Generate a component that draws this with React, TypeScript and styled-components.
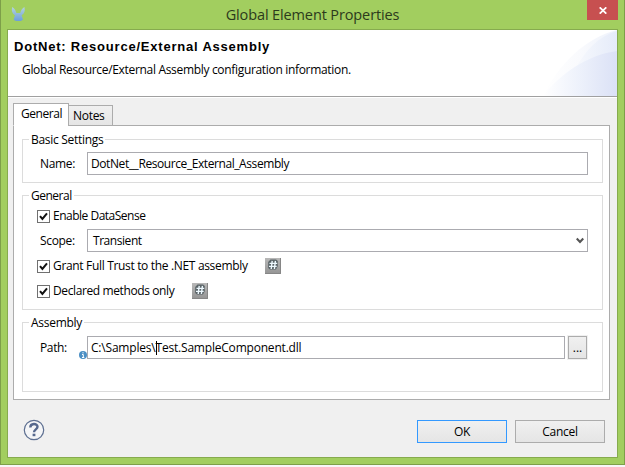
import React from "react";
import styled, { createGlobalStyle } from "styled-components";

const GlobalStyle = createGlobalStyle`
  *, *::before, *::after { box-sizing: border-box; }
  html, body { margin: 0; padding: 0; background: #f7f7f7; overflow: hidden; }
  body { font-family: "Open Sans", "Noto Sans", sans-serif; font-size: 12px; line-height: 16px; color: #000; }
  button, input { font: inherit; color: inherit; }
`;

const Window = styled.div`
  width: 625px;
  height: 465px;
  display: flex;
  flex-direction: column;
  background: #a2ce5f;
  border: 1px solid #7d9f49;
  border-top: 0;
  padding: 0 6px 6px;
`;

const TitleBar = styled.header`
  position: relative;
  height: 29px;
  flex: none;
  display: flex;
  justify-content: center;
`;

const AppIcon = styled.svg`
  position: absolute;
  left: 4px;
  top: 6px;
`;

const WindowTitle = styled.h1`
  margin: 0;
  font-size: 14.5px;
  font-weight: 400;
  line-height: 30px;
  letter-spacing: -0.12px;
  color: #2c3a1c;
  white-space: nowrap;
`;

const CloseButton = styled.button`
  position: absolute;
  right: 0;
  top: 0;
  width: 31px;
  height: 20px;
  padding: 0;
  border: 0;
  background: #c75050;
  display: flex;
  align-items: center;
  justify-content: center;
`;

const Client = styled.main`
  flex: 1;
  display: flex;
  flex-direction: column;
  border: 1px solid #86ab4e;
  background: #f0f0f0;
`;

const Banner = styled.section`
  position: relative;
  height: 67px;
  flex: none;
  background: #fff;
  border-bottom: 1px solid #a0a0a0;
  padding: 9px 0 0 6px;
`;

const BannerArt = styled.svg`
  position: absolute;
  right: 0;
  top: 0;
`;

const BannerTitle = styled.h2`
  margin: 0;
  font: 700 13px/16px "Liberation Sans", Arial, sans-serif;
  letter-spacing: 0.79px;
  white-space: nowrap;
`;

const BannerText = styled.p<{ $spacing: number }>`
  margin: 7px 0 0 8px;
  letter-spacing: ${(p) => p.$spacing}px;
  white-space: nowrap;
`;

const Body = styled.div`
  flex: 1;
  border-top: 1px solid #fff;
  padding: 5px 7px 0 5px;
`;

const Tabs = styled.nav`
  display: flex;
  align-items: flex-end;
  height: 23px;
  margin-bottom: -1px;
  position: relative;
`;

const Tab = styled.div<{ $active?: boolean }>`
  width: ${(p) => (p.$active ? 56 : 45)}px;
  height: ${(p) => (p.$active ? 23 : 21)}px;
  margin-left: ${(p) => (p.$active ? 0 : -1)}px;
  border: 1px solid #acacac;
  border-bottom-color: ${(p) => (p.$active ? "#fff" : "#acacac")};
  background: ${(p) => (p.$active ? "#fff" : "linear-gradient(#f0f0f0, #e5e5e5)")};
  padding: ${(p) => (p.$active ? "2px 0 0 7px" : "2px 0 0 4px")};
  letter-spacing: ${(p) => (p.$active ? -0.45 : -0.3)}px;
`;

const Pane = styled.div`
  height: 275px;
  border: 1px solid #acacac;
  background: #fff;
  padding: 13px 6px 0 8px;
`;

const Group = styled.section<{ $height: number; $gap?: number }>`
  height: ${(p) => p.$height}px;
  margin-bottom: ${(p) => p.$gap ?? 12}px;
  border: 1px solid #dcdcdc;
`;

const Legend = styled.h3<{ $spacing: number }>`
  width: max-content;
  height: 16px;
  margin: -8px 0 0 6px;
  padding: 0 2px;
  background: #fff;
  font-size: 12px;
  font-weight: 400;
  letter-spacing: ${(p) => p.$spacing}px;
`;

const Field = styled.div<{ $top: number }>`
  display: flex;
  align-items: center;
  height: 23px;
  margin-top: ${(p) => p.$top}px;
  padding-right: 14px;
`;

const FieldLabel = styled.label<{ $spacing: number }>`
  position: relative;
  width: 64px;
  padding-left: 17px;
  flex: none;
  letter-spacing: ${(p) => p.$spacing}px;
`;

const InfoIcon = styled.svg`
  position: absolute;
  left: 56px;
  top: 11px;
`;

const InputBox = styled.div<{ $spacing: number; $indent?: number }>`
  flex: 1;
  height: 23px;
  display: flex;
  align-items: center;
  border: 1px solid #ababb0;
  background: #fff;
  padding: 0 3px 0 ${(p) => p.$indent ?? 3}px;
  letter-spacing: ${(p) => p.$spacing}px;
  white-space: nowrap;
`;

const Caret = styled.span`
  width: 1px;
  height: 14px;
  margin-right: -1px;
  background: #000;
`;

const Chevron = styled.svg`
  margin-left: auto;
`;

const CheckRow = styled.div<{ $top: number }>`
  display: flex;
  align-items: center;
  height: 16px;
  margin-top: ${(p) => p.$top}px;
  padding-left: 14px;
`;

const CheckBox = styled.span`
  width: 13px;
  height: 13px;
  margin-right: 3px;
  border: 1px solid #707070;
  background: #fff;
  display: flex;
`;

const CheckLabel = styled.span<{ $width: number; $spacing: number }>`
  width: ${(p) => p.$width}px;
  letter-spacing: ${(p) => p.$spacing}px;
  white-space: nowrap;
`;

const PushButton = styled.button<{ $default?: boolean }>`
  width: 90px;
  height: 23px;
  padding: 0;
  border: 1px solid ${(p) => (p.$default ? "#3399ff" : "#acacac")};
  background: linear-gradient(#f0f0f0, #e5e5e5);
  letter-spacing: -0.25px;
`;

const BrowseButton = styled(PushButton)`
  width: 19px;
  margin: 0 1px 0 3px;
  box-shadow: 0 0 0 1px #f0f0f0;
  letter-spacing: 0;
`;

const Footer = styled.footer`
  display: flex;
  align-items: flex-start;
  gap: 8px;
  margin: 20px 5px 0 10px;
`;

const HelpIcon = styled.svg`
  margin: -1px auto 0 0;
`;

const HashIcon = () => (
  <svg width="16" height="16" viewBox="0 0 16 16">
    <defs>
      <linearGradient id="hashBg" x1="0" y1="0" x2="0" y2="1">
        <stop offset="0" stopColor="#b8b8b8" />
        <stop offset="1" stopColor="#949494" />
      </linearGradient>
    </defs>
    <rect width="16" height="16" fill="url(#hashBg)" />
    <path d="M0 15.5H15.5V0" fill="none" stroke="#868686" />
    <path d="M5.500 1.500h5.500l1.800 1.500v5l-1.800 3.500H5L3.200 10V4z" fill="#5a6468" />
    <path d="M7.200 2.800 6.200 11M10.400 2.800 9.400 11M4.500 5.400h7.700M4 8.400h7.700" stroke="#eef9ff" strokeWidth="1.400" />
  </svg>
);

const Check = ({ label, width, spacing, top, hash }: {
  label: string; width: number; spacing: number; top: number; hash?: boolean;
}) => (
  <CheckRow $top={top}>
    <CheckBox>
      <svg width="11" height="11" viewBox="0 0 11 11">
        <path d="M2 5.2 4.4 8 9 2.3" fill="none" stroke="#111" strokeWidth="2" />
      </svg>
    </CheckBox>
    <CheckLabel $width={width} $spacing={spacing}>{label}</CheckLabel>
    {hash && <HashIcon />}
  </CheckRow>
);

export default function App() {
  return (
    <>
      <GlobalStyle />
      <Window>
        <TitleBar>
          <AppIcon width="15" height="16" viewBox="0 0 15 16">
            <defs>
              <linearGradient id="mule" x1="0" y1="0" x2="0" y2="1">
                <stop offset="0" stopColor="#b4d3dc" />
                <stop offset="1" stopColor="#6c9fdc" />
              </linearGradient>
            </defs>
            <path
              d="M1.200 1C.2 4.500 1 7.500 4 9.200L2.700 13q0 2 4.600 2t4.600-2L10.600 9.200c3-1.700 3.800-4.700 2.800-8.200C11.500 2.300 10 4 9.200 7H5.400C4.600 4 3.100 2.300 1.200 1z"
              fill="url(#mule)"
            />
          </AppIcon>
          <WindowTitle>Global Element Properties</WindowTitle>
          <CloseButton aria-label="Close">
            <svg width="8" height="7" viewBox="0 0 8 7">
              <path d="M.7.3 7.300 6.700M7.300.3.7 6.700" stroke="#fff" strokeWidth="1.7" />
            </svg>
          </CloseButton>
        </TitleBar>
        <Client>
          <Banner>
            <BannerArt width="74" height="66" viewBox="0 0 74 66">
              <defs>
                <linearGradient id="outer" x1="0" x2="1">
                  <stop offset="0" stopColor="#fff" />
                  <stop offset=".5" stopColor="#f9fafd" />
                  <stop offset="1" stopColor="#eef2fb" />
                </linearGradient>
                <linearGradient id="middle" x1="0" x2="1">
                  <stop offset="0" stopColor="#f7f9fd" />
                  <stop offset="1" stopColor="#e5ebf9" />
                </linearGradient>
                <linearGradient id="inner" x1="0" x2="1">
                  <stop offset="0" stopColor="#fff" />
                  <stop offset=".5" stopColor="#edf1fb" />
                  <stop offset="1" stopColor="#dbe1f6" />
                </linearGradient>
              </defs>
              <path d="M0 66C16 34 42 8 74 0V66z" fill="url(#outer)" />
              <path d="M32 40C42 20 56 6 74 1V40z" fill="url(#middle)" />
              <path d="M0 66C19 42 45 25 74 21V66z" fill="url(#inner)" />
            </BannerArt>
            <BannerTitle>DotNet: Resource/External Assembly</BannerTitle>
            <BannerText $spacing={-0.32}>Global Resource/External Assembly configuration information.</BannerText>
          </Banner>
          <Body>
            <Tabs>
              <Tab $active>General</Tab>
              <Tab>Notes</Tab>
            </Tabs>
            <Pane>
              <Group $height={44}>
                <Legend $spacing={-0.3}>Basic Settings</Legend>
                <Field $top={4}>
                  <FieldLabel $spacing={-0.35}>Name:</FieldLabel>
                  <InputBox $spacing={-0.42}>DotNet__Resource_External_Assembly</InputBox>
                </Field>
              </Group>
              <Group $height={115}>
                <Legend $spacing={-0.5}>General</Legend>
                <Check top={4} label="Enable DataSense" width={150} spacing={-0.5} />
                <Field $top={5}>
                  <FieldLabel $spacing={-0.35}>Scope:</FieldLabel>
                  <InputBox $spacing={-0.45} $indent={5}>
                    Transient
                    <Chevron width="8" height="7" viewBox="0 0 8 7">
                      <path d="M.7 1.500 4 5 7.300 1.500" fill="none" stroke="#555" strokeWidth="2.200" />
                    </Chevron>
                  </InputBox>
                </Field>
                <Check top={6} label="Grant Full Trust to the .NET assembly" width={212} spacing={-0.33} hash />
                <Check top={9} label="Declared methods only" width={139} spacing={-0.39} hash />
              </Group>
              <Group $height={70} $gap={0}>
                <Legend $spacing={-0.27}>Assembly</Legend>
                <Field $top={5}>
                  <FieldLabel $spacing={-0.35}>
                    Path:
                    <InfoIcon width="8" height="8" viewBox="0 0 8 8">
                      <circle cx="4" cy="4" r="4" fill="#4b8fc4" />
                      <path d="M4 1.200v1.200M3 3.500h1.300V6.500M3 6.500h2.300" stroke="#fff" strokeWidth="1" fill="none" />
                    </InfoIcon>
                  </FieldLabel>
                  <InputBox $spacing={-0.2}>
                    C:\Samples\<Caret />Test.SampleComponent.dll
                  </InputBox>
                  <BrowseButton>...</BrowseButton>
                </Field>
              </Group>
            </Pane>
            <Footer>
              <HelpIcon width="22" height="22" viewBox="0 0 22 22">
                <circle cx="11" cy="11" r="9.700" fill="#f4f5f7" stroke="#5d6f91" strokeWidth="1.200" />
                <path d="M7.300 8.500C7.300 4 14.500 4 14.500 7.700c0 2.600-3.500 2.700-3.500 5.600" fill="none" stroke="#56688d" strokeWidth="2.400" />
                <rect x="9.600" y="14.700" width="2.800" height="2.500" fill="#56688d" />
              </HelpIcon>
              <PushButton $default>OK</PushButton>
              <PushButton>Cancel</PushButton>
            </Footer>
          </Body>
        </Client>
      </Window>
    </>
  );
}
